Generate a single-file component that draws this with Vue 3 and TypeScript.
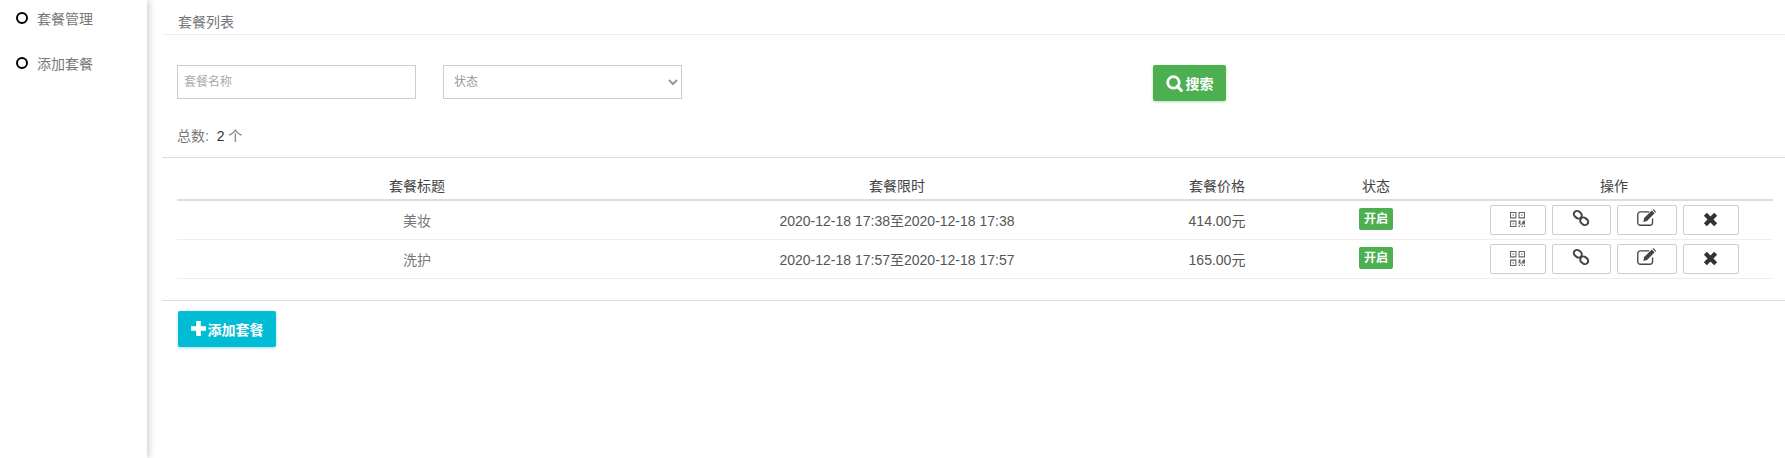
<template>
  <div class="page">
    <aside class="sidebar">
      <a v-for="item in menu" :key="item" class="menu-item">
        <span class="dot"></span>
        <span>{{ item }}</span>
      </a>
    </aside>

    <main class="main">
      <div class="page-title">套餐列表</div>

      <div class="search-row">
        <input class="field name-field" type="text" placeholder="套餐名称" />
        <select class="field state-field">
          <option>状态</option>
        </select>
        <button class="btn btn-search">
          <svg class="btn-icon" viewBox="0 0 16 16" width="17" height="17">
            <circle cx="7" cy="7" r="5.4" fill="none" stroke="#fff" stroke-width="2.6" />
            <path d="M10.8 10.8 14.4 14.6" stroke="#fff" stroke-width="3" stroke-linecap="round" />
          </svg>
          搜索
        </button>
      </div>

      <div class="total">总数:&nbsp;&nbsp;<span class="total-num">2</span> 个</div>

      <div class="table-wrap">
        <table class="table">
          <colgroup>
            <col style="width: 480px" />
            <col style="width: 480px" />
            <col style="width: 160px" />
            <col style="width: 158px" />
            <col style="width: 318px" />
          </colgroup>
          <thead>
            <tr>
              <th>套餐标题</th>
              <th>套餐限时</th>
              <th>套餐价格</th>
              <th>状态</th>
              <th>操作</th>
            </tr>
          </thead>
          <tbody>
            <tr v-for="row in rows" :key="row.title">
              <td class="td-title">{{ row.title }}</td>
              <td>{{ row.time }}</td>
              <td>{{ row.price }}</td>
              <td><span class="badge">开启</span></td>
              <td>
                <div class="actions">
                  <button class="act act-sm">
                    <svg viewBox="0 0 14 14" width="15" height="15">
                      <path fill="#666" fill-rule="evenodd" d="M0 0h6v6H0zM1 1v4h4V1zM2.400 2.400h1.200v1.200H2.400zM8 0h6v6H8zM9 1v4h4V1zM10.400 2.400h1.200v1.200h-1.200zM0 8h6v6H0zM1 9v4h4V9zM2.400 10.400h1.200v1.200H2.400zM8 8h1.800v3.400h1.400V9h1V8H14v3.600h-2.600v-1h-.6v1.800H9.600v-1H8zM8 12.600h1.200V14H8zM10.800 12.800H12V14h-1.200zM13 12.800h1V14h-1z" />
                    </svg>
                  </button>
                  <button class="act act-md">
                    <svg viewBox="0 0 18 18" width="18" height="18" class="ico-link">
                      <g fill="none" stroke="#444" stroke-width="2">
                        <rect x="1.600" y="2.500" width="8.400" height="6.400" rx="3.200" transform="rotate(38 5.800 5.700)" />
                        <rect x="8" y="9.100" width="8.400" height="6.400" rx="3.200" transform="rotate(38 12.200 12.300)" />
                      </g>
                    </svg>
                  </button>
                  <button class="act act-lg">
                    <svg viewBox="0 0 18 16" width="20" height="18" class="ico-edit">
                      <path fill="none" stroke="#444" stroke-width="1.200" d="M14 8.500v3.700a2.300 2.300 0 0 1-2.300 2.300H3a2.300 2.300 0 0 1-2.300-2.300V4.800A2.300 2.300 0 0 1 3 2.500h8" />
                      <path fill="#444" d="M6.400 8.100 13.300 1.200l2.600 2.600L9 10.700l-3.300.8zM14 .5l.7-.5 2.600 2.600-.7.700z" />
                    </svg>
                  </button>
                  <button class="act act-sm">
                    <svg viewBox="0 0 14 14" width="15" height="15">
                      <path d="M2.200 2.200 11.800 11.800M11.800 2.200 2.200 11.800" stroke="#333" stroke-width="4" stroke-linecap="butt" />
                    </svg>
                  </button>
                </div>
              </td>
            </tr>
          </tbody>
        </table>
      </div>

      <div class="footer-row">
        <button class="btn btn-add">
          <svg class="btn-icon" viewBox="0 0 14 14" width="15" height="15">
            <path d="M7 0v14M0 7h14" stroke="#fff" stroke-width="4.400" />
          </svg>
          添加套餐
        </button>
      </div>
    </main>
  </div>
</template>

<script setup lang="ts">
interface PackageRow {
  title: string;
  time: string;
  price: string;
}

const menu: string[] = ['套餐管理', '添加套餐'];

const rows: PackageRow[] = [
  { title: '美妆', time: '2020-12-18 17:38至2020-12-18 17:38', price: '414.00元' },
  { title: '洗护', time: '2020-12-18 17:57至2020-12-18 17:57', price: '165.00元' },
];
</script>

<style>
html,
body {
  margin: 0;
  background: #fff;
  overflow: hidden;
}
</style>

<style scoped>
.page {
  display: flex;
  height: 458px;
  font-family: 'Liberation Sans', 'Noto Sans CJK SC', sans-serif;
  font-size: 14px;
  color: #555;
}

.sidebar {
  flex: 0 0 147px;
  padding: 7px 0 0 16px;
  box-sizing: border-box;
  box-shadow: 2px 0 7px rgba(0, 0, 0, 0.2);
}

.menu-item {
  display: flex;
  align-items: center;
  gap: 9px;
  height: 22px;
  margin-bottom: 23px;
  color: #777;
}

.dot {
  width: 8px;
  height: 8px;
  border: 2px solid #000;
  border-radius: 50%;
}

.main {
  flex: 1;
  min-width: 0;
  padding-left: 15px;
}

.page-title {
  height: 35px;
  box-sizing: border-box;
  padding: 12px 0 0 16px;
  line-height: 20px;
  color: #777;
  border-bottom: 1px solid #eee;
}

.search-row {
  display: flex;
  align-items: flex-start;
  padding: 30px 0 0 15px;
  height: 36px;
}

.field {
  height: 34px;
  box-sizing: border-box;
  border: 1px solid #ccc;
  background: #fff;
  font-family: inherit;
  font-size: 12px;
  color: #999;
  border-radius: 0;
  outline: none;
}

.name-field {
  width: 239px;
  padding: 0 6px;
}

.name-field::placeholder {
  color: #aaa;
}

.state-field {
  width: 239px;
  margin-left: 27px;
  padding: 0 6px;
}

.btn {
  display: inline-flex;
  align-items: center;
  border: none;
  border-radius: 2px;
  color: #fff;
  font-family: inherit;
  font-weight: 700;
  font-size: 14px;
  padding: 0;
  justify-content: center;
}

.btn-search {
  width: 73px;
  height: 36px;
  gap: 3px;
  margin-left: 471px;
  background: #4caf50;
  box-shadow: 0 1px 3px rgba(76, 175, 80, 0.4);
}

.total {
  height: 20px;
  line-height: 20px;
  margin-top: 25px;
  padding-left: 15px;
  color: #777;
}

.total-num {
  color: #333;
}

.table-wrap {
  margin-top: 11px;
  border-top: 1px solid #ddd;
  border-bottom: 1px solid #ddd;
  padding: 0 12px 21px 15px;
}

.table {
  width: 1596px;
  table-layout: fixed;
  border-collapse: collapse;
}

th {
  height: 42px;
  box-sizing: border-box;
  padding: 18px 0 0;
  font-weight: 400;
  color: #444;
  line-height: 20px;
  border-bottom: 2px solid #ddd;
  vertical-align: top;
}

td {
  height: 39px;
  box-sizing: border-box;
  padding: 0;
  text-align: center;
  color: #555;
  border-bottom: 1px solid #eee;
}

.td-title {
  color: #777;
}

.badge {
  display: inline-block;
  width: 34px;
  height: 22px;
  position: relative;
  top: -1px;
  line-height: 22px;
  border-radius: 2px;
  background: #4caf50;
  color: #fff;
  font-size: 12px;
  font-weight: 700;
}

.actions {
  display: flex;
  justify-content: center;
  gap: 6px;
}

.act {
  display: flex;
  align-items: center;
  justify-content: center;
  height: 30px;
  padding: 0;
  background: #fff;
  border: 1px solid #ccc;
  border-radius: 2px;
}

.act-sm {
  width: 56px;
}

.act-md {
  width: 59px;
}

.act-lg {
  width: 60px;
}

.ico-link,
.ico-edit {
  margin-top: -3px;
}

.footer-row {
  padding: 10px 0 0 16px;
}

.btn-add {
  width: 98px;
  height: 36px;
  gap: 2px;
  background: #00bcd4;
  box-shadow: 0 1px 3px rgba(0, 188, 212, 0.4);
}
</style>
